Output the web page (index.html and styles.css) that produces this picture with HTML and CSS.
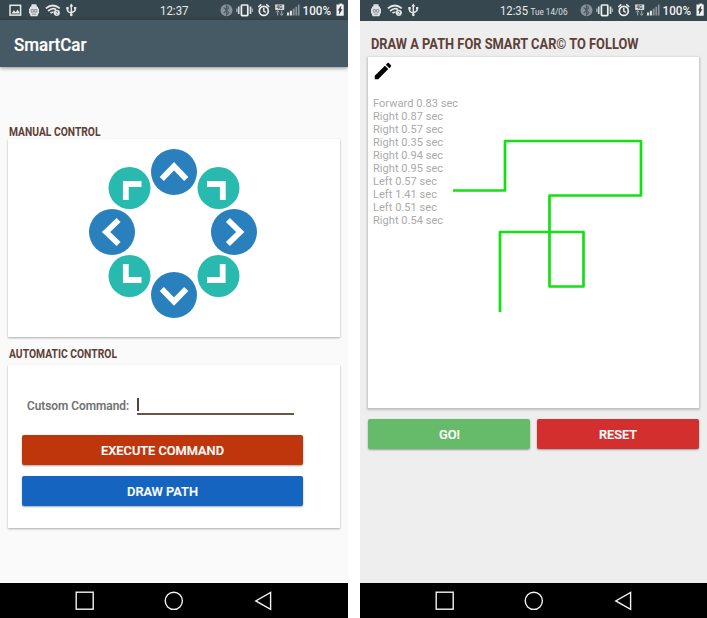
FILE: index.html
```html
<!DOCTYPE html>
<html lang="en">
<head>
<meta charset="utf-8">
<title>SmartCar</title>
<link rel="stylesheet" href="styles.css">
</head>
<body>
<svg class="defs" width="0" height="0" aria-hidden="true">
  <symbol id="left-icons" viewBox="0 0 50 20">
    <g transform="translate(-2 0)">
    <path d="M5.500 6V4.300h5V6l1.500 1v1.500h1v5h-1V15l-.8 1.200H4.800L4 15v-1.500H3v-5h1V7z" fill="#dfe3e5"/>
    <path d="M5.200 9.500h2.200v2.600H5.200zm3.400 0h2.200v2.600H8.600zM6 14.200h4" fill="none" stroke="#73818a" stroke-width=".8"/>
    </g>
    <path d="M17.800 8.300q7-5.600 14 0M20 11q5-4 8 -1.300M22.500 13.200q1.500-1.300 3-.8" fill="none" stroke="#e2e6e8" stroke-width="1.700"/>
    <circle cx="28.800" cy="12.800" r="3.100" fill="#e2e6e8"/>
    <path d="M27.800 12q.9-1.200 1.600-.3t-.6 1.500m0 .8v.8" fill="none" stroke="#37474f" stroke-width=".8"/>
    <path d="M43.300 5v10M39.500 8v2.200q0 1.800 3.800 2.800M47.100 7.800v2.100q0 1.500-3.800 2.600" fill="none" stroke="#e2e6e8" stroke-width="1.500"/>
    <path d="M43.300 3.500l2 3h-4zM38.300 7h2.400v2.400h-2.400zM46 7h2.300v2.300H46z" fill="#e2e6e8"/>
    <circle cx="43.300" cy="14.800" r="1.400" fill="#e2e6e8"/>
  </symbol>
  <symbol id="right-icons" viewBox="0 0 128 20">
    <circle cx="6.500" cy="10.300" r="6" fill="#87929a"/>
    <path d="M3.800 7.500l5 5L6.500 15V5.500L8.800 8l-5 5" fill="none" stroke="#4a5961" stroke-width="1.100"/>
    <rect x="21.400" y="5" width="6.400" height="10.600" rx=".8" fill="none" stroke="#eef0f1" stroke-width="1.700"/>
    <path d="M18.700 6.500v7.500M30.500 6.500v7.500" stroke="#d0d6d9" stroke-width="1.700"/>
    <path d="M16.800 8.500v3.500M32.300 8.500v3.500" stroke="#aab4b9" stroke-width="1.200"/>
    <circle cx="43.800" cy="10.900" r="4.500" fill="none" stroke="#eef0f1" stroke-width="1.700"/>
    <path d="M43.800 8v3.200l2 1.200M38.300 7l3-2.600M49.300 7l-3-2.600" fill="none" stroke="#eef0f1" stroke-width="1.400"/>
    <rect x="55.200" y="4.500" width="9" height="5.400" fill="#dfe3e5"/>
    <text x="56.200" y="9" class="net">4G</text>
    <path d="M57.700 15.500v-4.800M56.200 12.200l1.500-1.600 1.500 1.600M61.700 10.500v4.800M60.200 13.700l1.500 1.600 1.500-1.600" fill="none" stroke="#9eabb1"/>
    <path d="M67 12.500h2.100v3H67zM69.900 10.700h2v4.800h-2z" fill="#e7eaec"/>
    <path d="M72.700 8.800h1.900v6.700h-1.900zM75.400 6.700h1.800v8.800h-1.800zM78 4.600h1.500v10.900H78z" fill="#89959b"/>
    <text x="82.500" y="14.600" class="percent" textLength="28.500" lengthAdjust="spacingAndGlyphs">100%</text>
    <path d="M118 4.500h1.600v-1h2.600v1h1.500v11.300H116.500V4.500z" fill="#f4f5f6"/>
    <path d="M120.900 6.300l-2.500 4h1.500l-.7 3.500 2.700-4.400h-1.500z" fill="#27343a" stroke="#27343a" stroke-width=".6"/>
  </symbol>
  <symbol id="nav-icons" viewBox="0 0 348 35">
    <g fill="none" stroke="#f2f2f2" stroke-width="1.400">
      <rect x="76.200" y="9.200" width="17" height="17"/>
      <circle cx="173.800" cy="17.800" r="8.600"/>
      <path d="M270.600 9.500v16.800L255.800 17.900z"/>
    </g>
  </symbol>
</svg>
<main class="screens">
  <section class="phone phone-home">
    <header class="status">
      <svg class="picture" width="13" height="20"><rect x="1" y="5.300" width="10.600" height="9.800" fill="none" stroke="#e8ebec" stroke-width="1.500"/><path d="M2.500 13.500l2.400-3.200 1.800 1.900 2-2.800 2.200 4.100z" fill="#e8ebec"/></svg>
      <svg class="left-icons" width="50" height="20"><use href="#left-icons"/></svg>
      <svg class="clock" width="30" height="20"><text x="0" y="14.800" class="time" textLength="28.500" lengthAdjust="spacingAndGlyphs">12:37</text></svg>
      <svg class="right-icons" width="128" height="20"><use href="#right-icons"/></svg>
    </header>
    <div class="appbar"><svg width="90" height="47"><text x="0" y="30.500" class="app-title" textLength="72.500" lengthAdjust="spacingAndGlyphs">SmartCar</text></svg></div>
    <div class="home-body">
      <svg class="heading" width="120" height="16"><text x="0" y="13" class="label" textLength="91.500" lengthAdjust="spacingAndGlyphs">MANUAL CONTROL</text></svg>
      <div class="card manual">
        <svg width="170" height="172" viewBox="89 148 170 172">
          <g fill="#28b9af"><circle cx="129.500" cy="188" r="21"/><circle cx="218.500" cy="188" r="21"/><circle cx="129.500" cy="276" r="21"/><circle cx="218.500" cy="276" r="21"/></g>
          <g fill="#2980bd"><circle cx="174" cy="172" r="23"/><circle cx="112" cy="232" r="23"/><circle cx="234" cy="232" r="23"/><circle cx="174" cy="295" r="23"/></g>
          <g fill="none" stroke="#fff" stroke-width="5.800">
            <path d="M161.800 179L174 166.300l12.200 12.700M161.800 289L174 301.600 186.200 289M118.600 220l-12.500 12 12.500 12M227.900 220l12.300 12-12.300 12"/>
            <path d="M141.500 184h-15.700v16M207 184h15.800v16M125.800 264v16h15.700M222.700 264v16H207"/>
          </g>
        </svg>
      </div>
      <svg class="heading auto-heading" width="120" height="16"><text x="0" y="13" class="label" textLength="108" lengthAdjust="spacingAndGlyphs">AUTOMATIC CONTROL</text></svg>
      <div class="card automatic">
        <div class="command">
          <svg width="110" height="20"><text x="0" y="14" class="field-label" textLength="102" lengthAdjust="spacingAndGlyphs">Cutsom Command:</text></svg>
          <div class="field"><i class="caret"></i></div>
        </div>
        <div class="btn execute"><svg width="123" height="20"><text x="0" y="14.900" class="btn-text" textLength="123" lengthAdjust="spacingAndGlyphs">EXECUTE COMMAND</text></svg></div>
        <div class="btn draw"><svg width="71" height="20"><text x="0" y="14.900" class="btn-text" textLength="71" lengthAdjust="spacingAndGlyphs">DRAW PATH</text></svg></div>
      </div>
    </div>
    <footer class="nav"><svg width="348" height="35"><use href="#nav-icons"/></svg></footer>
  </section>
  <section class="phone phone-path">
    <header class="status">
      <svg class="left-icons" width="50" height="20"><use href="#left-icons"/></svg>
      <svg class="clock" width="70" height="20"><text x="0" y="14.800" class="time" textLength="28" lengthAdjust="spacingAndGlyphs">12:35</text><text x="30.500" y="14.800" class="date" textLength="37" lengthAdjust="spacingAndGlyphs">Tue 14/06</text></svg>
      <svg class="right-icons" width="128" height="20"><use href="#right-icons"/></svg>
    </header>
    <div class="path-body">
      <svg class="path-heading" width="280" height="20"><text x="0" y="15.600" class="title" textLength="267.500" lengthAdjust="spacingAndGlyphs">DRAW A PATH FOR SMART CAR© TO FOLLOW</text></svg>
      <div class="card canvas">
        <svg class="route" width="331" height="351" viewBox="368 57 331 351"><path d="M453 190.500h52V141h136v54.500h-91.500V286.500h34V232H500v80" fill="none" stroke="#14e014" stroke-width="2.700" stroke-linejoin="round"/></svg>
        <svg class="pencil" width="22" height="22" viewBox="0 0 24 24"><path d="M3 17.250V21h3.750L17.810 9.940l-3.750-3.750L3 17.250zM20.710 7.040c.39-.39.39-1.020 0-1.410l-2.340-2.340c-.39-.39-1.020-.39-1.410 0l-1.830 1.830 3.750 3.750 1.830-1.830z"/></svg>
        <ul class="log">
          <li>Forward 0.83 sec</li><li>Right 0.87 sec</li><li>Right 0.57 sec</li><li>Right 0.35 sec</li><li>Right 0.94 sec</li><li>Right 0.95 sec</li><li>Left 0.57 sec</li><li>Left 1.41 sec</li><li>Left 0.51 sec</li><li>Right 0.54 sec</li>
        </ul>
      </div>
      <div class="actions">
        <div class="btn go"><svg width="21" height="20"><text x="0" y="14.700" class="btn-text" textLength="21" lengthAdjust="spacingAndGlyphs">GO!</text></svg></div>
        <div class="btn reset"><svg width="38" height="20"><text x="0" y="14.700" class="btn-text" textLength="38" lengthAdjust="spacingAndGlyphs">RESET</text></svg></div>
      </div>
    </div>
    <footer class="nav"><svg width="348" height="35"><use href="#nav-icons"/></svg></footer>
  </section>
</main>
</body>
</html>
```

FILE: styles.css
```css
* { box-sizing: border-box; }
body { margin: 0; background: #fff; font-family: Roboto, "Liberation Sans", sans-serif; overflow: hidden; }
svg { display: block; flex: none; overflow: visible; }
.defs { position: absolute; }
.screens { display: flex; gap: 12px; width: 707px; height: 618px; }
.phone { display: flex; flex-direction: column; overflow: hidden; }
.phone-home { width: 348px; background: #fafafa; }
.phone-path { width: 347px; background: #eee; }
.status { display: flex; flex: none; height: 20px; background: #37474f; }
.phone-home .status { padding-left: 9px; }
.phone-home .left-icons { margin-left: 6px; }
.phone-home .clock { margin-left: 82px; }
.phone-home .right-icons { margin-left: 30px; }
.phone-path .status { padding-left: 10px; height: 20.500px; }
.phone-path .clock { margin-left: 79.500px; }
.phone-path .right-icons { margin-left: 10px; }
.time { font-size: 12.500px; fill: #e5e9eb; }
.date { font-size: 9.500px; fill: #dde1e3; }
.percent { font-size: 12px; font-weight: 500; fill: #f1f3f4; }
.net { font-size: 5px; font-weight: 700; fill: #37474f; }
.appbar { flex: none; height: 47px; padding-left: 14px; background: #465a65; box-shadow: 0 1px 4px rgba(0,0,0,.45); }
.app-title { font-size: 17.500px; font-weight: 500; fill: #fff; stroke: #fff; stroke-width: .2px; }
.home-body { flex: 1; padding: 56px 8px 0; }
.heading { margin-left: .5px; }
.label { font-size: 12px; font-weight: 700; fill: #5d4037; }
.title { font-size: 14.500px; font-weight: 700; fill: #5d4037; }
.card { background: #fff; box-shadow: 0 1px 2px rgba(0,0,0,.32); }
.manual { width: 332px; height: 197.500px; padding: 9px 0 0 81px; }
.auto-heading { margin-top: 8px; }
.automatic { width: 332px; height: 163px; margin-top: 4.500px; padding: 30px 14px 0; }
.command { display: flex; height: 40px; padding-left: 5px; }
.command svg { margin-top: 1px; }
.field { width: 157px; height: 20px; border-bottom: 2px solid #6d534b; padding-top: 3px; }
.caret { display: block; width: 1.500px; height: 13px; background: #5d4037; }
.field-label { font-size: 12px; font-weight: 500; fill: #707070; stroke: #707070; stroke-width: .15px; }
.btn { display: flex; align-items: center; justify-content: center; height: 30px; border-radius: 2px; box-shadow: 0 1px 2px rgba(0,0,0,.35); }
.btn-text { font-size: 13.500px; font-weight: 500; fill: #fff; stroke: #fff; stroke-width: .2px; }
.execute, .draw { width: 281px; }
.execute { background: #bf360c; }
.draw { margin-top: 10.500px; background: #1565c0; }
.nav { flex: none; height: 35px; background: #000; }
.path-body { flex: 1; padding: 12px 8px 0; }
.path-heading { margin-left: 3px; }
.canvas { position: relative; width: 331px; height: 351px; margin-top: 4px; padding-top: 40px; box-shadow: 0 1px 2px 1px rgba(0,0,0,.2); }
.route { position: absolute; left: 0; top: 0; }
.pencil { position: absolute; left: 4px; top: 3px; }
.log { margin: 0; padding: 0 0 0 5px; list-style: none; font-size: 11px; line-height: 13px; color: #aaa; letter-spacing: .050px; }
.actions { display: flex; gap: 7px; margin-top: 11px; }
.actions .btn { width: 162px; }
.go { background: #66bb6a; }
.reset { background: #d32f2f; }
```
